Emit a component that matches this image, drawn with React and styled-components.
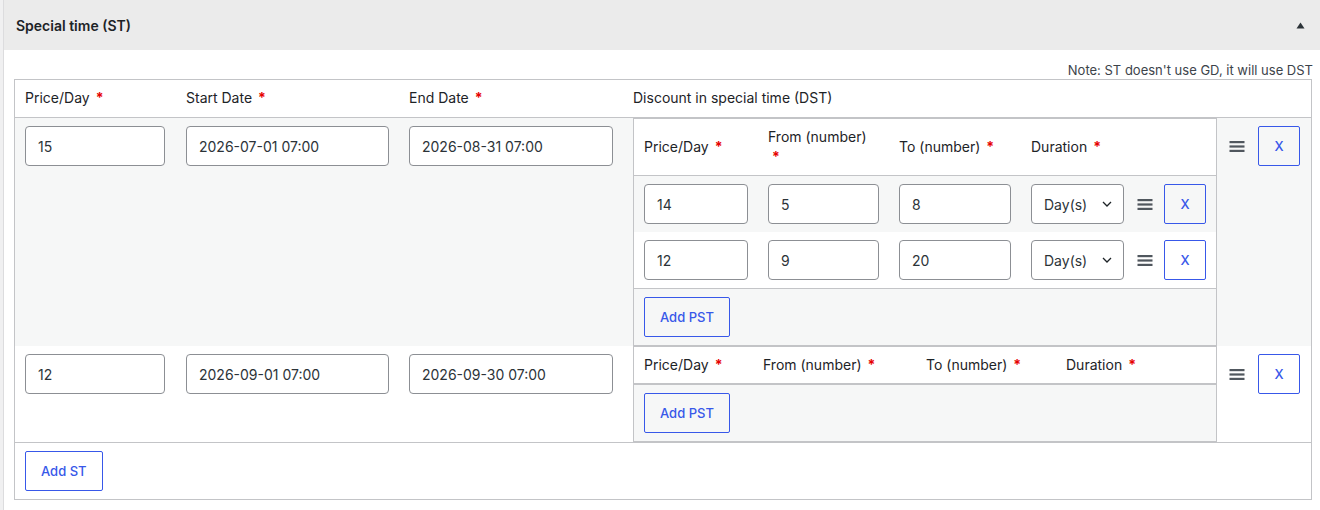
import React from 'react'
import styled, { createGlobalStyle } from 'styled-components'

const GlobalStyle = createGlobalStyle`
  html, body {
    margin: 0;
    padding: 0;
    overflow: hidden;
    background: #f0f0f1;
  }
  body {
    font-family: Inter, "Noto Sans", sans-serif;
    font-size: 14px;
    color: #1d2327;
  }
  * {
    box-sizing: border-box;
  }
`

const Panel = styled.section`
  margin-left: 3px;
  width: 1327px;
  height: 510px;
  background: #fff;
  border-left: 1px solid #dcdcde;
`

const PanelHeader = styled.header`
  display: flex;
  align-items: center;
  justify-content: space-between;
  height: 50px;
  padding: 0 25px 0 12px;
  background: #ebebeb;
`

const Title = styled.h2`
  margin: 0;
  font-size: 14px;
  font-weight: 600;
  color: #1d2327;
`

const PanelBody = styled.div`
  padding: 12px 17px 0 10px;
`

const Note = styled.p`
  margin: 0;
  text-align: right;
  font-size: 13px;
  line-height: 17px;
  color: #3c434a;
`

const Table = styled.table`
  width: ${p => p.$width}px;
  table-layout: fixed;
  border-collapse: separate;
  border-spacing: 0;
  border: 1px solid #c3c4c7;
`

const HeadCell = styled.th`
  padding: ${p => (p.$main ? '8px 10px 9px' : '8px 10px')};
  text-align: left;
  font-weight: 400;
  font-size: 14px;
  line-height: 20px;
  color: #1d2327;
  vertical-align: middle;
  border-bottom: 1px solid #c3c4c7;
  background: #fff;
`

const Row = styled.tr`
  background: ${p => (p.$shaded ? '#f6f7f7' : '#fff')};
`

const Cell = styled.td`
  padding: ${p => p.$pad || '8px 10px'};
  vertical-align: top;
`

const FootCell = styled.td`
  padding: 8px 10px;
  border-top: 1px solid #c3c4c7;
  background: ${p => (p.$shaded ? '#f6f7f7' : '#fff')};
`

const Required = styled.span`
  display: ${p => (p.$block ? 'block' : 'inline')};
  margin-left: ${p => (p.$block ? '4px' : '6px')};
  color: #e60000;
  font-weight: 700;
`

const Input = styled.input`
  display: block;
  width: ${p => p.$w}px;
  height: 40px;
  padding: 0 12px;
  border: 1px solid #8c8f94;
  border-radius: 4px;
  background: #fff;
  font-family: inherit;
  font-size: 14px;
  color: #2c3338;
`

const SelectWrap = styled.div`
  position: relative;
  width: 93px;
`

const Select = styled.select`
  appearance: none;
  display: block;
  width: 100%;
  height: 40px;
  padding: 0 24px 0 12px;
  border: 1px solid #8c8f94;
  border-radius: 4px;
  background: #fff;
  font-family: inherit;
  font-size: 14px;
  color: #2c3338;
`

const Chevron = styled.svg`
  position: absolute;
  right: 12px;
  top: 17px;
  pointer-events: none;
`

const Button = styled.button`
  height: 40px;
  width: ${p => (p.$w ? `${p.$w}px` : 'auto')};
  padding: ${p => (p.$w ? '0' : '0 15px')};
  border: 1px solid #3858e9;
  border-radius: 2px;
  background: transparent;
  color: #3858e9;
  font-family: inherit;
  font-size: 13px;
  font-weight: 500;
  cursor: pointer;
`

const Actions = styled.div`
  display: flex;
  align-items: center;
  gap: ${p => p.$gap}px;
`

const Handle = styled.svg`
  flex: none;
  cursor: move;
`

const DragHandle = () => (
  <Handle width="16" height="11" viewBox="0 0 16 11">
    <rect x="0.5" y="0" width="15" height="2.2" fill="#50575e" />
    <rect x="0.5" y="4.4" width="15" height="2.2" fill="#50575e" />
    <rect x="0.5" y="8.8" width="15" height="2.2" fill="#50575e" />
  </Handle>
)

const CollapseArrow = () => (
  <svg width="9" height="7" viewBox="0 0 9 7">
    <polygon points="4.5,0.5 8.5,6.5 0.5,6.5" fill="#2c3338" />
  </svg>
)

const specialTimes = [
  {
    price: '15',
    start: '2026-07-01 07:00',
    end: '2026-08-31 07:00',
    discounts: [
      { price: '14', from: '5', to: '8' },
      { price: '12', from: '9', to: '20' },
    ],
  },
  {
    price: '12',
    start: '2026-09-01 07:00',
    end: '2026-09-30 07:00',
    discounts: [],
  },
]

const DiscountTable = ({ discounts }) => {
  const filled = discounts.length > 0
  const cols = filled ? [124, 131, 132, 106, 89] : [119, 163, 140, 130, 30]
  return (
    <Table $width={584}>
      <colgroup>
        {cols.map((w, i) => <col key={i} style={{ width: w }} />)}
      </colgroup>
      <thead>
        <tr>
          <HeadCell>Price/Day<Required>*</Required></HeadCell>
          <HeadCell>From (number)<Required $block={filled}>*</Required></HeadCell>
          <HeadCell>To (number)<Required>*</Required></HeadCell>
          <HeadCell>Duration<Required>*</Required></HeadCell>
          <HeadCell />
        </tr>
      </thead>
      <tbody>
        {discounts.map((d, i) => (
          <Row key={i} $shaded={i % 2 === 0}>
            <Cell $pad="8px 0 8px 10px"><Input $w={104} defaultValue={d.price} /></Cell>
            <Cell $pad="8px 0 8px 10px"><Input $w={111} defaultValue={d.from} /></Cell>
            <Cell $pad="8px 0 8px 10px"><Input $w={112} defaultValue={d.to} /></Cell>
            <Cell $pad="8px 0 8px 10px">
              <SelectWrap>
                <Select defaultValue="day">
                  <option value="day">Day(s)</option>
                  <option value="week">Week(s)</option>
                </Select>
                <Chevron width="10" height="6" viewBox="0 0 10 6">
                  <path d="M1 1l4 4 4-4" fill="none" stroke="#1d2327" strokeWidth="1.3" />
                </Chevron>
              </SelectWrap>
            </Cell>
            <Cell $pad="8px 10px 8px 10px">
              <Actions $gap={11}>
                <DragHandle />
                <Button $w={42}>X</Button>
              </Actions>
            </Cell>
          </Row>
        ))}
      </tbody>
      <tfoot>
        <tr>
          <FootCell colSpan={5} $shaded>
            <Button>Add PST</Button>
          </FootCell>
        </tr>
      </tfoot>
    </Table>
  )
}

export default function App() {
  return (
    <>
      <GlobalStyle />
      <Panel>
        <PanelHeader>
          <Title>Special time (ST)</Title>
          <CollapseArrow />
        </PanelHeader>
        <PanelBody>
          <Note>Note: ST doesn't use GD, it will use DST</Note>
          <Table $width={1298}>
            <colgroup>
              <col style={{ width: 161 }} />
              <col style={{ width: 223 }} />
              <col style={{ width: 224 }} />
              <col style={{ width: 594 }} />
              <col style={{ width: 94 }} />
            </colgroup>
            <thead>
              <tr>
                <HeadCell $main>Price/Day<Required>*</Required></HeadCell>
                <HeadCell $main>Start Date<Required>*</Required></HeadCell>
                <HeadCell $main>End Date<Required>*</Required></HeadCell>
                <HeadCell $main>Discount in special time (DST)</HeadCell>
                <HeadCell $main />
              </tr>
            </thead>
            <tbody>
              {specialTimes.map((st, i) => (
                <Row key={i} $shaded={i % 2 === 0}>
                  <Cell><Input $w={140} defaultValue={st.price} /></Cell>
                  <Cell><Input $w={203} defaultValue={st.start} /></Cell>
                  <Cell><Input $w={204} defaultValue={st.end} /></Cell>
                  <Cell $pad="0 0 0 10px">
                    <DiscountTable discounts={st.discounts} />
                  </Cell>
                  <Cell $pad="8px 10px 8px 12px">
                    <Actions $gap={13}>
                      <DragHandle />
                      <Button $w={42}>X</Button>
                    </Actions>
                  </Cell>
                </Row>
              ))}
            </tbody>
            <tfoot>
              <tr>
                <FootCell colSpan={5}>
                  <Button>Add ST</Button>
                </FootCell>
              </tr>
            </tfoot>
          </Table>
        </PanelBody>
      </Panel>
    </>
  )
}
